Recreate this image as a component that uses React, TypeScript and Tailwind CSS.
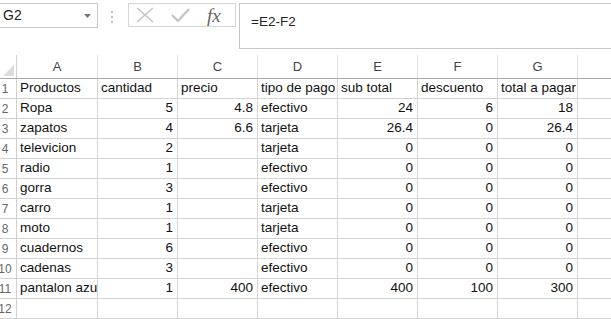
import React from "react";

const cols = ["A", "B", "C", "D", "E", "F", "G", "H"];
const widths = ["w-[81px]", "w-[80px]", "w-[80px]", "w-[80px]", "w-[80px]", "w-[80px]", "w-[80px]", "w-[80px]"];

type Cell = string | number | null;

const rows: Cell[][] = [
  ["Productos", "cantidad", "precio", "tipo de pago", "sub total", "descuento", "total a pagar"],
  ["Ropa", 5, 4.8, "efectivo", 24, 6, 18],
  ["zapatos", 4, 6.6, "tarjeta", 26.4, 0, 26.4],
  ["televicion", 2, null, "tarjeta", 0, 0, 0],
  ["radio", 1, null, "efectivo", 0, 0, 0],
  ["gorra", 3, null, "efectivo", 0, 0, 0],
  ["carro", 1, null, "tarjeta", 0, 0, 0],
  ["moto", 1, null, "tarjeta", 0, 0, 0],
  ["cuadernos", 6, null, "efectivo", 0, 0, 0],
  ["cadenas", 3, null, "efectivo", 0, 0, 0],
  ["pantalon azul", 1, 400, "efectivo", 400, 100, 300],
  [],
];

function FormulaBar() {
  return (
    <div className="flex h-[55px] items-start pt-[3px]">
      {/* name box */}
      <div className="flex h-[25px] w-[98px] items-center justify-between border-y border-r border-[#c6c6c6] bg-white pl-[3px] pr-[6px]">
        <span className="text-[14px] text-[#222]">G2</span>
        <svg width="7" height="4" viewBox="0 0 7 4">
          <path d="M0 0 L7 0 L3.5 4 Z" fill="#777" />
        </svg>
      </div>
      {/* grip */}
      <div className="ml-[13px] mt-[8px] flex flex-col gap-[3px]">
        <span className="h-[2px] w-[2px] bg-[#bdbdbd]" />
        <span className="h-[2px] w-[2px] bg-[#bdbdbd]" />
        <span className="h-[2px] w-[2px] bg-[#bdbdbd]" />
      </div>
      {/* cancel / enter / fx */}
      <div className="ml-[15px] flex h-[24px] w-[108px] items-center border border-[#d6d6d6] bg-white pl-[7px]">
        <svg width="18" height="16" viewBox="0 0 18 16">
          <path d="M1 1 L17 15 M17 1 L1 15" stroke="#c4c4c4" strokeWidth="1.6" fill="none" />
        </svg>
        <svg className="ml-[17px]" width="19" height="14" viewBox="0 0 19 14">
          <path d="M1 7 L7 13 L18 1" stroke="#c4c4c4" strokeWidth="2.2" fill="none" />
        </svg>
        <span className="ml-[17px] text-[19px] italic leading-none text-[#666]" style={{ fontFamily: "'Liberation Serif', serif" }}>
          fx
        </span>
      </div>
      {/* formula */}
      <div className="ml-[3px] h-[46px] flex-1 border-y border-l border-[#c6c6c6] bg-white pl-[11px] pt-[5px]">
        <span className="text-[13.5px] text-[#222]">=E2-F2</span>
      </div>
    </div>
  );
}

export default function App() {
  return (
    <div
      className="h-[319px] w-[611px] overflow-hidden bg-white text-[#111]"
      style={{ fontFamily: "'Liberation Sans', Arial, sans-serif" }}
    >
      <FormulaBar />

      <div className="-ml-[5px] flex flex-col">
        {/* column headers */}
        <div className="flex h-[24px] border-b border-[#ababab]">
          <div className="relative w-[22px] shrink-0 border-r border-[#d0d0d0]">
            <svg className="absolute bottom-[2px] right-[2px]" width="11" height="11" viewBox="0 0 11 11">
              <path d="M11 0 L11 11 L0 11 Z" fill="#dcdcdc" />
            </svg>
          </div>
          {cols.map((c, i) => (
            <div
              key={c}
              className={`${widths[i]} flex shrink-0 items-center justify-center border-r border-[#e1e1e1] text-[13px] text-[#444]`}
            >
              {c}
            </div>
          ))}
        </div>

        {rows.map((r, ri) => (
          <div key={ri} className="flex h-[20px]">
            <div className="flex w-[22px] shrink-0 items-center justify-center overflow-visible border-r border-b border-[#d0d0d0] pr-[1px] text-[12px] text-[#666]">
              {ri + 1}
            </div>
            {cols.map((c, ci) => {
              const v = r[ci];
              const num = typeof v === "number";
              return (
                <div
                  key={c}
                  className={`${widths[ci]} flex shrink-0 items-center overflow-hidden whitespace-nowrap border-r border-b border-[#d4d4d4] text-[13.5px] ${
                    num ? "justify-end pr-[4px]" : "justify-start pl-[3px]"
                  }`}
                >
                  {v ?? ""}
                </div>
              );
            })}
          </div>
        ))}
      </div>
    </div>
  );
}
